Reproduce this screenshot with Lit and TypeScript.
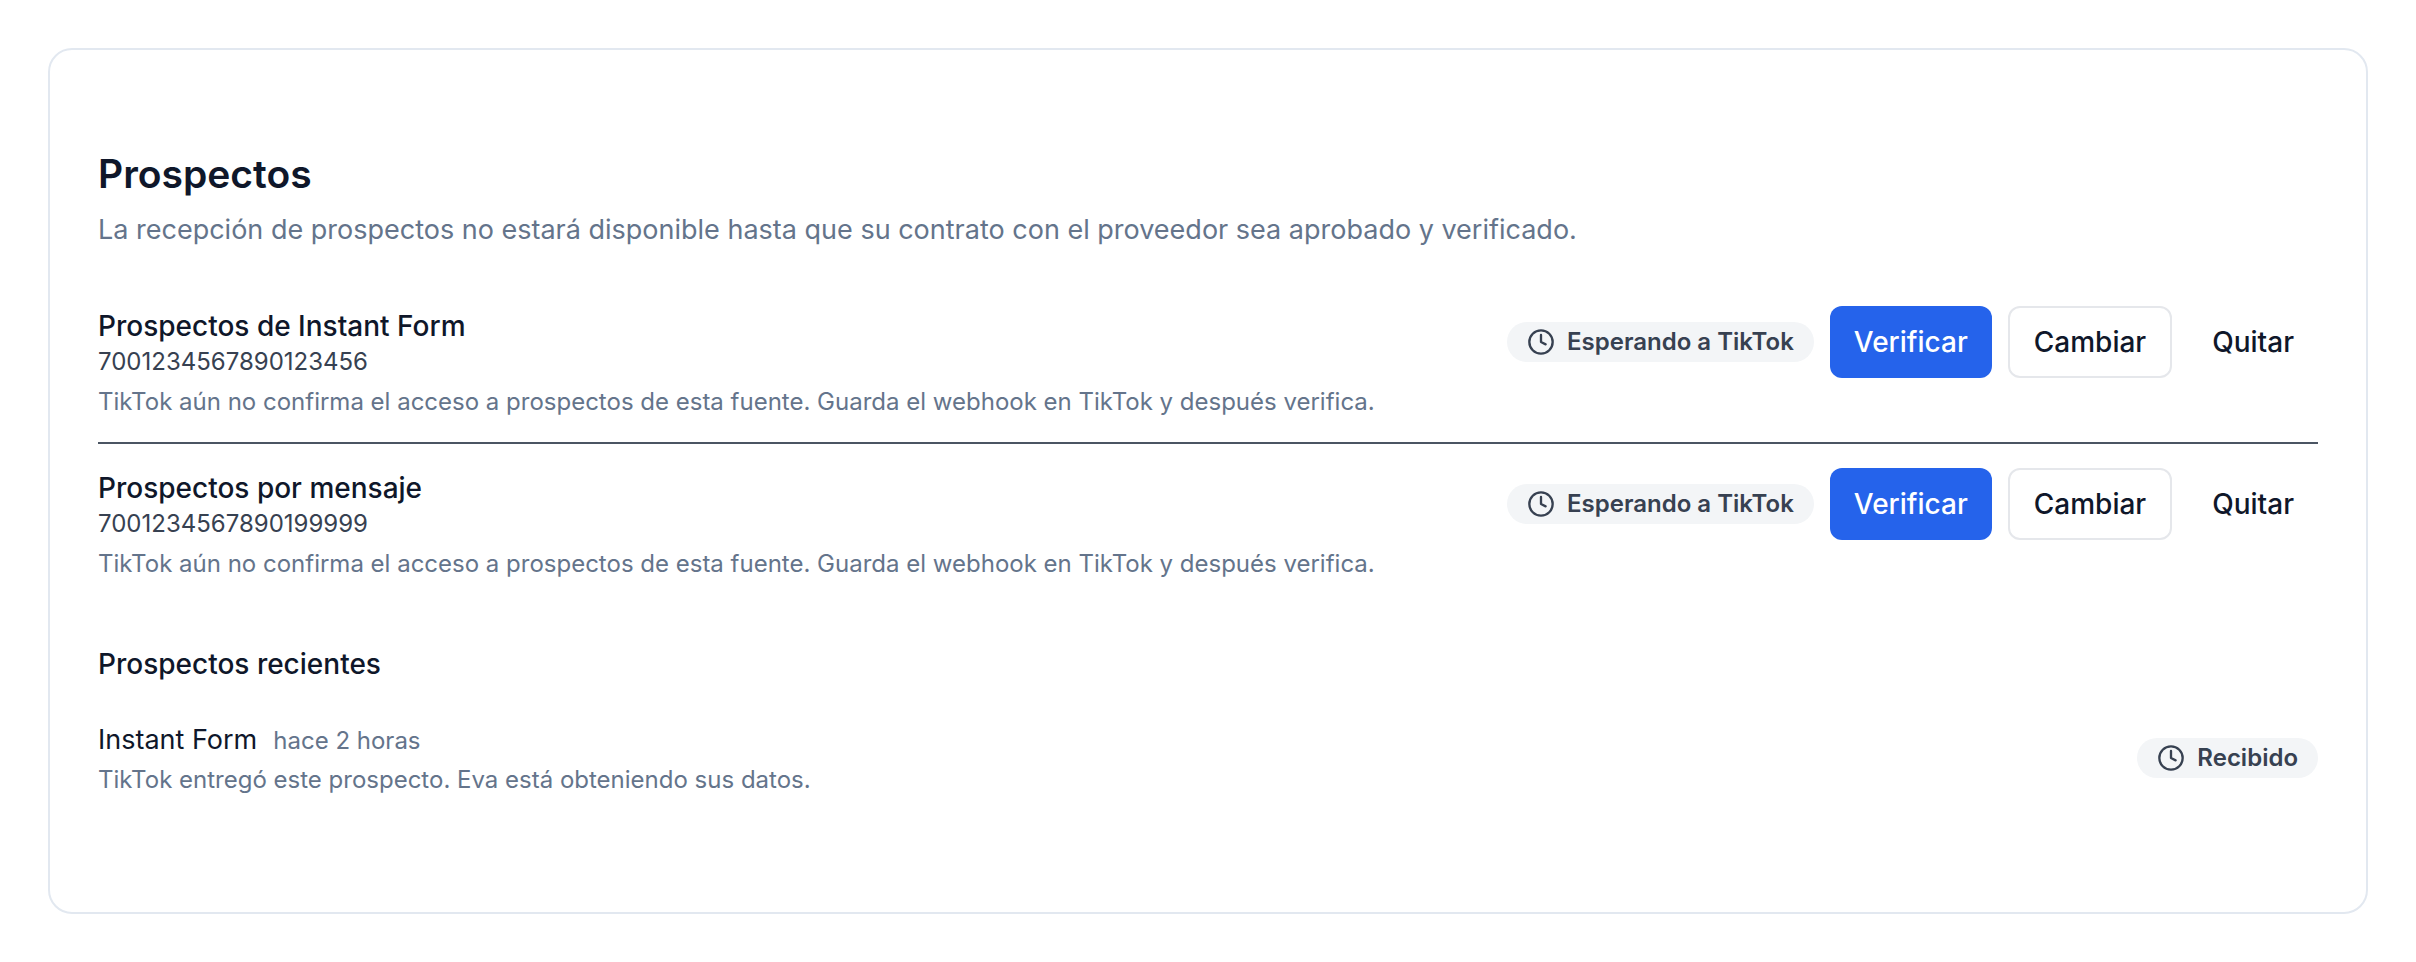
import { LitElement, html, css } from "lit";
import { customElement, property } from "lit/decorators.js";

interface LeadSource {
  name: string;
  id: string;
  note: string;
  status: string;
}

interface Lead {
  source: string;
  when: string;
  note: string;
  status: string;
}

const PENDING_NOTE =
  "TikTok aún no confirma el acceso a prospectos de esta fuente. Guarda el webhook en TikTok y después verifica.";

const SOURCES: LeadSource[] = [
  { name: "Prospectos de Instant Form", id: "7001234567890123456", note: PENDING_NOTE, status: "Esperando a TikTok" },
  { name: "Prospectos por mensaje", id: "7001234567890199999", note: PENDING_NOTE, status: "Esperando a TikTok" },
];

const LEADS: Lead[] = [
  {
    source: "Instant Form",
    when: "hace 2 horas",
    note: "TikTok entregó este prospecto. Eva está obteniendo sus datos.",
    status: "Recibido",
  },
];

@customElement("status-badge")
export class StatusBadge extends LitElement {
  @property() label = "";

  static styles = css`
    :host {
      display: inline-flex;
      flex: none;
      align-items: center;
      gap: 12px;
      height: 40px;
      padding: 0 20px;
      border-radius: 20px;
      background: #f3f5f7;
      color: #374151;
      font-size: 24px;
      line-height: 32px;
      font-weight: 600;
      white-space: nowrap;
    }
    .icon {
      width: 28px;
      height: 28px;
      flex: none;
    }
  `;

  render() {
    return html`
      <svg class="icon" viewBox="0 0 24 24" fill="none" stroke="currentColor" stroke-width="2"
        stroke-linecap="round" stroke-linejoin="round" aria-hidden="true">
        <circle cx="12" cy="12" r="10"></circle>
        <path d="M12 6v6l4 2"></path>
      </svg>
      <span>${this.label}</span>
    `;
  }
}

@customElement("app-root")
export class AppRoot extends LitElement {
  static styles = css`
    :host {
      display: block;
      padding: 48px;
      background: #fff;
      color: #0f172a;
      font-family: Inter, "Liberation Sans", sans-serif;
      font-size: 28px;
      line-height: 40px;
    }
    h2,
    h3,
    p,
    ul {
      margin: 0;
      padding: 0;
    }
    ul {
      list-style: none;
    }
    .card {
      padding: 104px 48px 116px;
      border: 2px solid #e2e8f0;
      border-radius: 24px;
    }
    .title {
      font-size: 39px;
      line-height: 40px;
      font-weight: 600;
    }
    .subtitle {
      margin-top: 16px;
      font-size: 27px;
      color: #64748b;
    }
    .sources {
      margin-top: 32px;
    }
    .source {
      display: flex;
      align-items: flex-start;
      justify-content: space-between;
      gap: 24px;
      padding: 24px 0;
    }
    .source + .source {
      border-top: 2px solid #4b5563;
    }
    .name,
    .subheading {
      font-size: 28px;
      line-height: 40px;
      font-weight: 500;
    }
    .id,
    .note,
    .when {
      font-size: 24px;
      line-height: 32px;
    }
    .id {
      color: #374151;
    }
    .note,
    .when {
      color: #64748b;
    }
    .source .note {
      margin-top: 8px;
    }
    .actions {
      display: flex;
      flex: none;
      align-items: center;
      gap: 16px;
    }
    button {
      height: 72px;
      padding: 0 24px;
      border: 0;
      border-radius: 12px;
      background: transparent;
      color: inherit;
      font: inherit;
      font-weight: 500;
      cursor: pointer;
    }
    .primary {
      background: #2563eb;
      color: #fff;
    }
    .outline {
      border: 2px solid #e5e7eb;
    }
    .subheading {
      margin-top: 40px;
    }
    .leads {
      margin-top: 36px;
    }
    .lead {
      display: flex;
      align-items: center;
      justify-content: space-between;
      gap: 24px;
    }
    .origin {
      display: flex;
      align-items: baseline;
      gap: 16px;
      font-size: 27px;
    }
    .lead .note {
      margin-top: 4px;
    }
  `;

  render() {
    return html`
      <section class="card">
        <h2 class="title">Prospectos</h2>
        <p class="subtitle">
          La recepción de prospectos no estará disponible hasta que su contrato con el proveedor sea aprobado y verificado.
        </p>
        <ul class="sources">
          ${SOURCES.map(
            (s) => html`
              <li class="source">
                <div>
                  <h3 class="name">${s.name}</h3>
                  <p class="id">${s.id}</p>
                  <p class="note">${s.note}</p>
                </div>
                <div class="actions">
                  <status-badge label=${s.status}></status-badge>
                  <button class="primary" type="button">Verificar</button>
                  <button class="outline" type="button">Cambiar</button>
                  <button type="button">Quitar</button>
                </div>
              </li>
            `
          )}
        </ul>
        <h3 class="subheading">Prospectos recientes</h3>
        <ul class="leads">
          ${LEADS.map(
            (l) => html`
              <li class="lead">
                <div>
                  <div class="origin"><span>${l.source}</span><span class="when">${l.when}</span></div>
                  <p class="note">${l.note}</p>
                </div>
                <status-badge label=${l.status}></status-badge>
              </li>
            `
          )}
        </ul>
      </section>
    `;
  }
}
